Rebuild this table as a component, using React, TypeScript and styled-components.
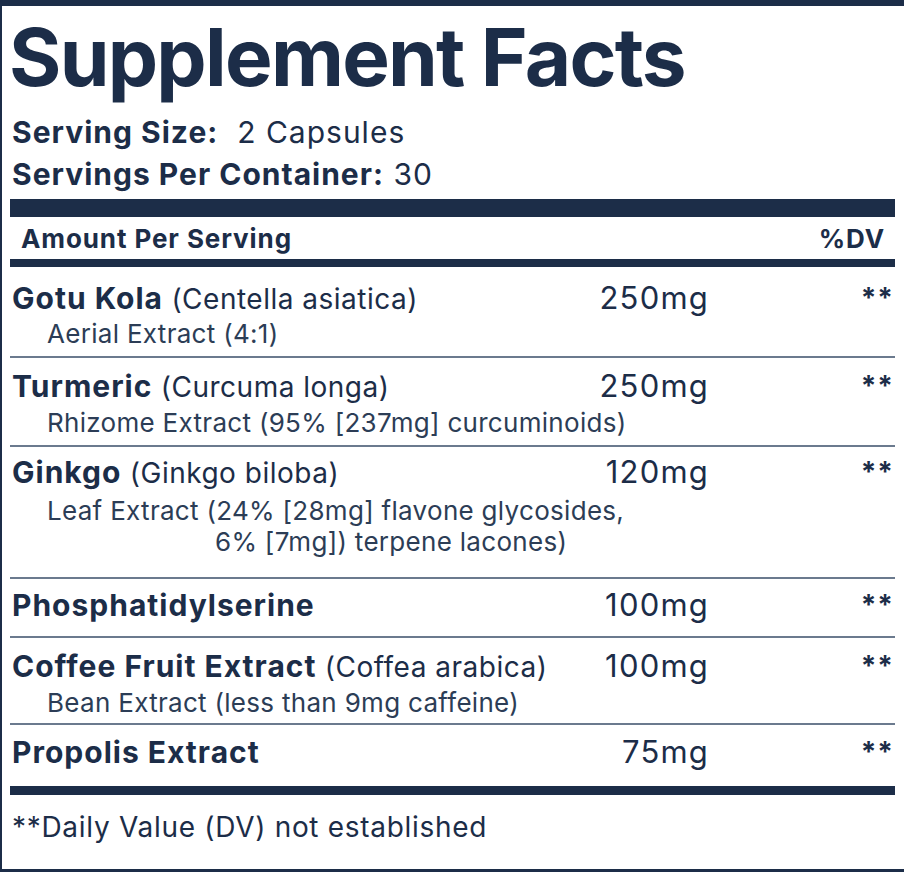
import React from 'react';
import styled, { createGlobalStyle } from 'styled-components';

const navy = '#1c2d48';
const rule = '#6b7a8e';

const GlobalStyle = createGlobalStyle`
  html, body {
    margin: 0;
    padding: 0;
    background: #ffffff;
  }
  body {
    font-family: Inter, "Liberation Sans", sans-serif;
    color: ${navy};
  }
`;

const Label = styled.div`
  width: 904px;
  height: 872px;
  box-sizing: border-box;
  border-top: 6px solid ${navy};
  border-left: 2px solid ${navy};
  border-bottom: 3px solid ${navy};
  padding: 0 9px 0 8px;
  display: flex;
  flex-direction: column;
  overflow: hidden;
`;

const Title = styled.h1`
  margin: 11px 0 0 -1px;
  font-size: 80px;
  line-height: 80px;
  font-weight: 700;
  letter-spacing: -1.75px;
`;

const ServingBlock = styled.div`
  margin-top: 14px;
  padding-left: 2px;
`;

const ServingLine = styled.div`
  font-size: 30px;
  line-height: 42px;
  font-weight: 400;
  letter-spacing: 1px;

  b {
    font-weight: 700;
  }
`;

const Bar = styled.div<{ $h: number; $mt?: number }>`
  height: ${(p) => p.$h}px;
  margin-top: ${(p) => p.$mt ?? 0}px;
  background: ${navy};
`;

const HeaderRow = styled.div`
  height: 42px;
  display: flex;
  align-items: center;
  justify-content: space-between;
  padding: 0 10px 0 11px;
  font-size: 26px;
  font-weight: 700;
  letter-spacing: 0.9px;
`;

const Row = styled.div<{ $pt: number; $pb: number; $last?: boolean }>`
  display: grid;
  grid-template-columns: 1fr 150px 185px;
  padding: ${(p) => p.$pt}px 2px ${(p) => p.$pb}px;
  border-bottom: ${(p) => (p.$last ? 'none' : `2px solid ${rule}`)};
`;

const Name = styled.div`
  font-size: 28px;
  line-height: 34px;
  letter-spacing: 0.5px;
  white-space: nowrap;

  b {
    font-size: 30px;
    font-weight: 700;
    letter-spacing: 1px;
  }
`;

const Amount = styled.div`
  font-size: 31px;
  line-height: 34px;
  letter-spacing: 1.2px;
  margin-right: -1px;
  text-align: right;
`;

const DV = styled.div`
  font-size: 28px;
  line-height: 34px;
  font-weight: 700;
  letter-spacing: 1px;
  margin-right: -1px;
  text-align: right;
`;

const Sub = styled.div<{ $lh: number; $mt: number }>`
  grid-column: 1 / 4;
  margin-top: ${(p) => p.$mt}px;
  padding-left: 35px;
  font-size: 26px;
  line-height: ${(p) => p.$lh}px;
  letter-spacing: 0.3px;
  color: #2c3d56;
`;

const SubLine = styled.div<{ $indent?: number }>`
  padding-left: ${(p) => p.$indent ?? 0}px;
  white-space: nowrap;
`;

const Footer = styled.div`
  flex: 1;
  display: flex;
  align-items: center;
  padding: 0 0 10px 2px;
  font-size: 28px;
  letter-spacing: 0.7px;
`;

type Ingredient = {
  name: string;
  latin?: string;
  amount: string;
  sub?: string[];
  pt: number;
  pb: number;
  lh?: number;
  mt?: number;
  indent?: number;
};

const ingredients: Ingredient[] = [
  {
    name: 'Gotu Kola',
    latin: '(Centella asiatica)',
    amount: '250mg',
    sub: ['Aerial Extract (4:1)'],
    pt: 14,
    pb: 5,
    mt: 1,
  },
  {
    name: 'Turmeric',
    latin: '(Curcuma longa)',
    amount: '250mg',
    sub: ['Rhizome Extract (95% [237mg] curcuminoids)'],
    pt: 11,
    pb: 5,
    mt: 2,
  },
  {
    name: 'Ginkgo',
    latin: '(Ginkgo biloba)',
    amount: '120mg',
    sub: ['Leaf Extract (24% [28mg] flavone glycosides,', '6% [7mg]) terpene lacones)'],
    pt: 8,
    pb: 20,
    lh: 31,
    mt: 5,
    indent: 168,
  },
  { name: 'Phosphatidylserine', amount: '100mg', pt: 9, pb: 13 },
  {
    name: 'Coffee Fruit Extract',
    latin: '(Coffea arabica)',
    amount: '100mg',
    sub: ['Bean Extract (less than 9mg caffeine)'],
    pt: 11,
    pb: 3,
    mt: 2,
  },
  { name: 'Propolis Extract', amount: '75mg', pt: 10, pb: 16 },
];

const App: React.FC = () => {
  return (
    <>
      <GlobalStyle />
      <Label>
        <Title>Supplement Facts</Title>
        <ServingBlock>
          <ServingLine>
            <b>Serving Size:</b>&nbsp; 2 Capsules
          </ServingLine>
          <ServingLine>
            <b>Servings Per Container:</b> 30
          </ServingLine>
        </ServingBlock>
        <Bar $h={18} $mt={4} />
        <HeaderRow>
          <span>Amount Per Serving</span>
          <span>%DV</span>
        </HeaderRow>
        <Bar $h={8} />
        {ingredients.map((item, i) => (
          <Row key={item.name} $pt={item.pt} $pb={item.pb} $last={i === ingredients.length - 1}>
            <Name>
              <b>{item.name}</b>
              {item.latin && <> {item.latin}</>}
            </Name>
            <Amount>{item.amount}</Amount>
            <DV>**</DV>
            {item.sub && (
              <Sub $lh={item.lh ?? 34} $mt={item.mt ?? 0}>
                {item.sub.map((line, j) => (
                  <SubLine key={line} $indent={j > 0 ? item.indent : 0}>
                    {line}
                  </SubLine>
                ))}
              </Sub>
            )}
          </Row>
        ))}
        <Bar $h={9} />
        <Footer>**Daily Value (DV) not established</Footer>
      </Label>
    </>
  );
};

export default App;
